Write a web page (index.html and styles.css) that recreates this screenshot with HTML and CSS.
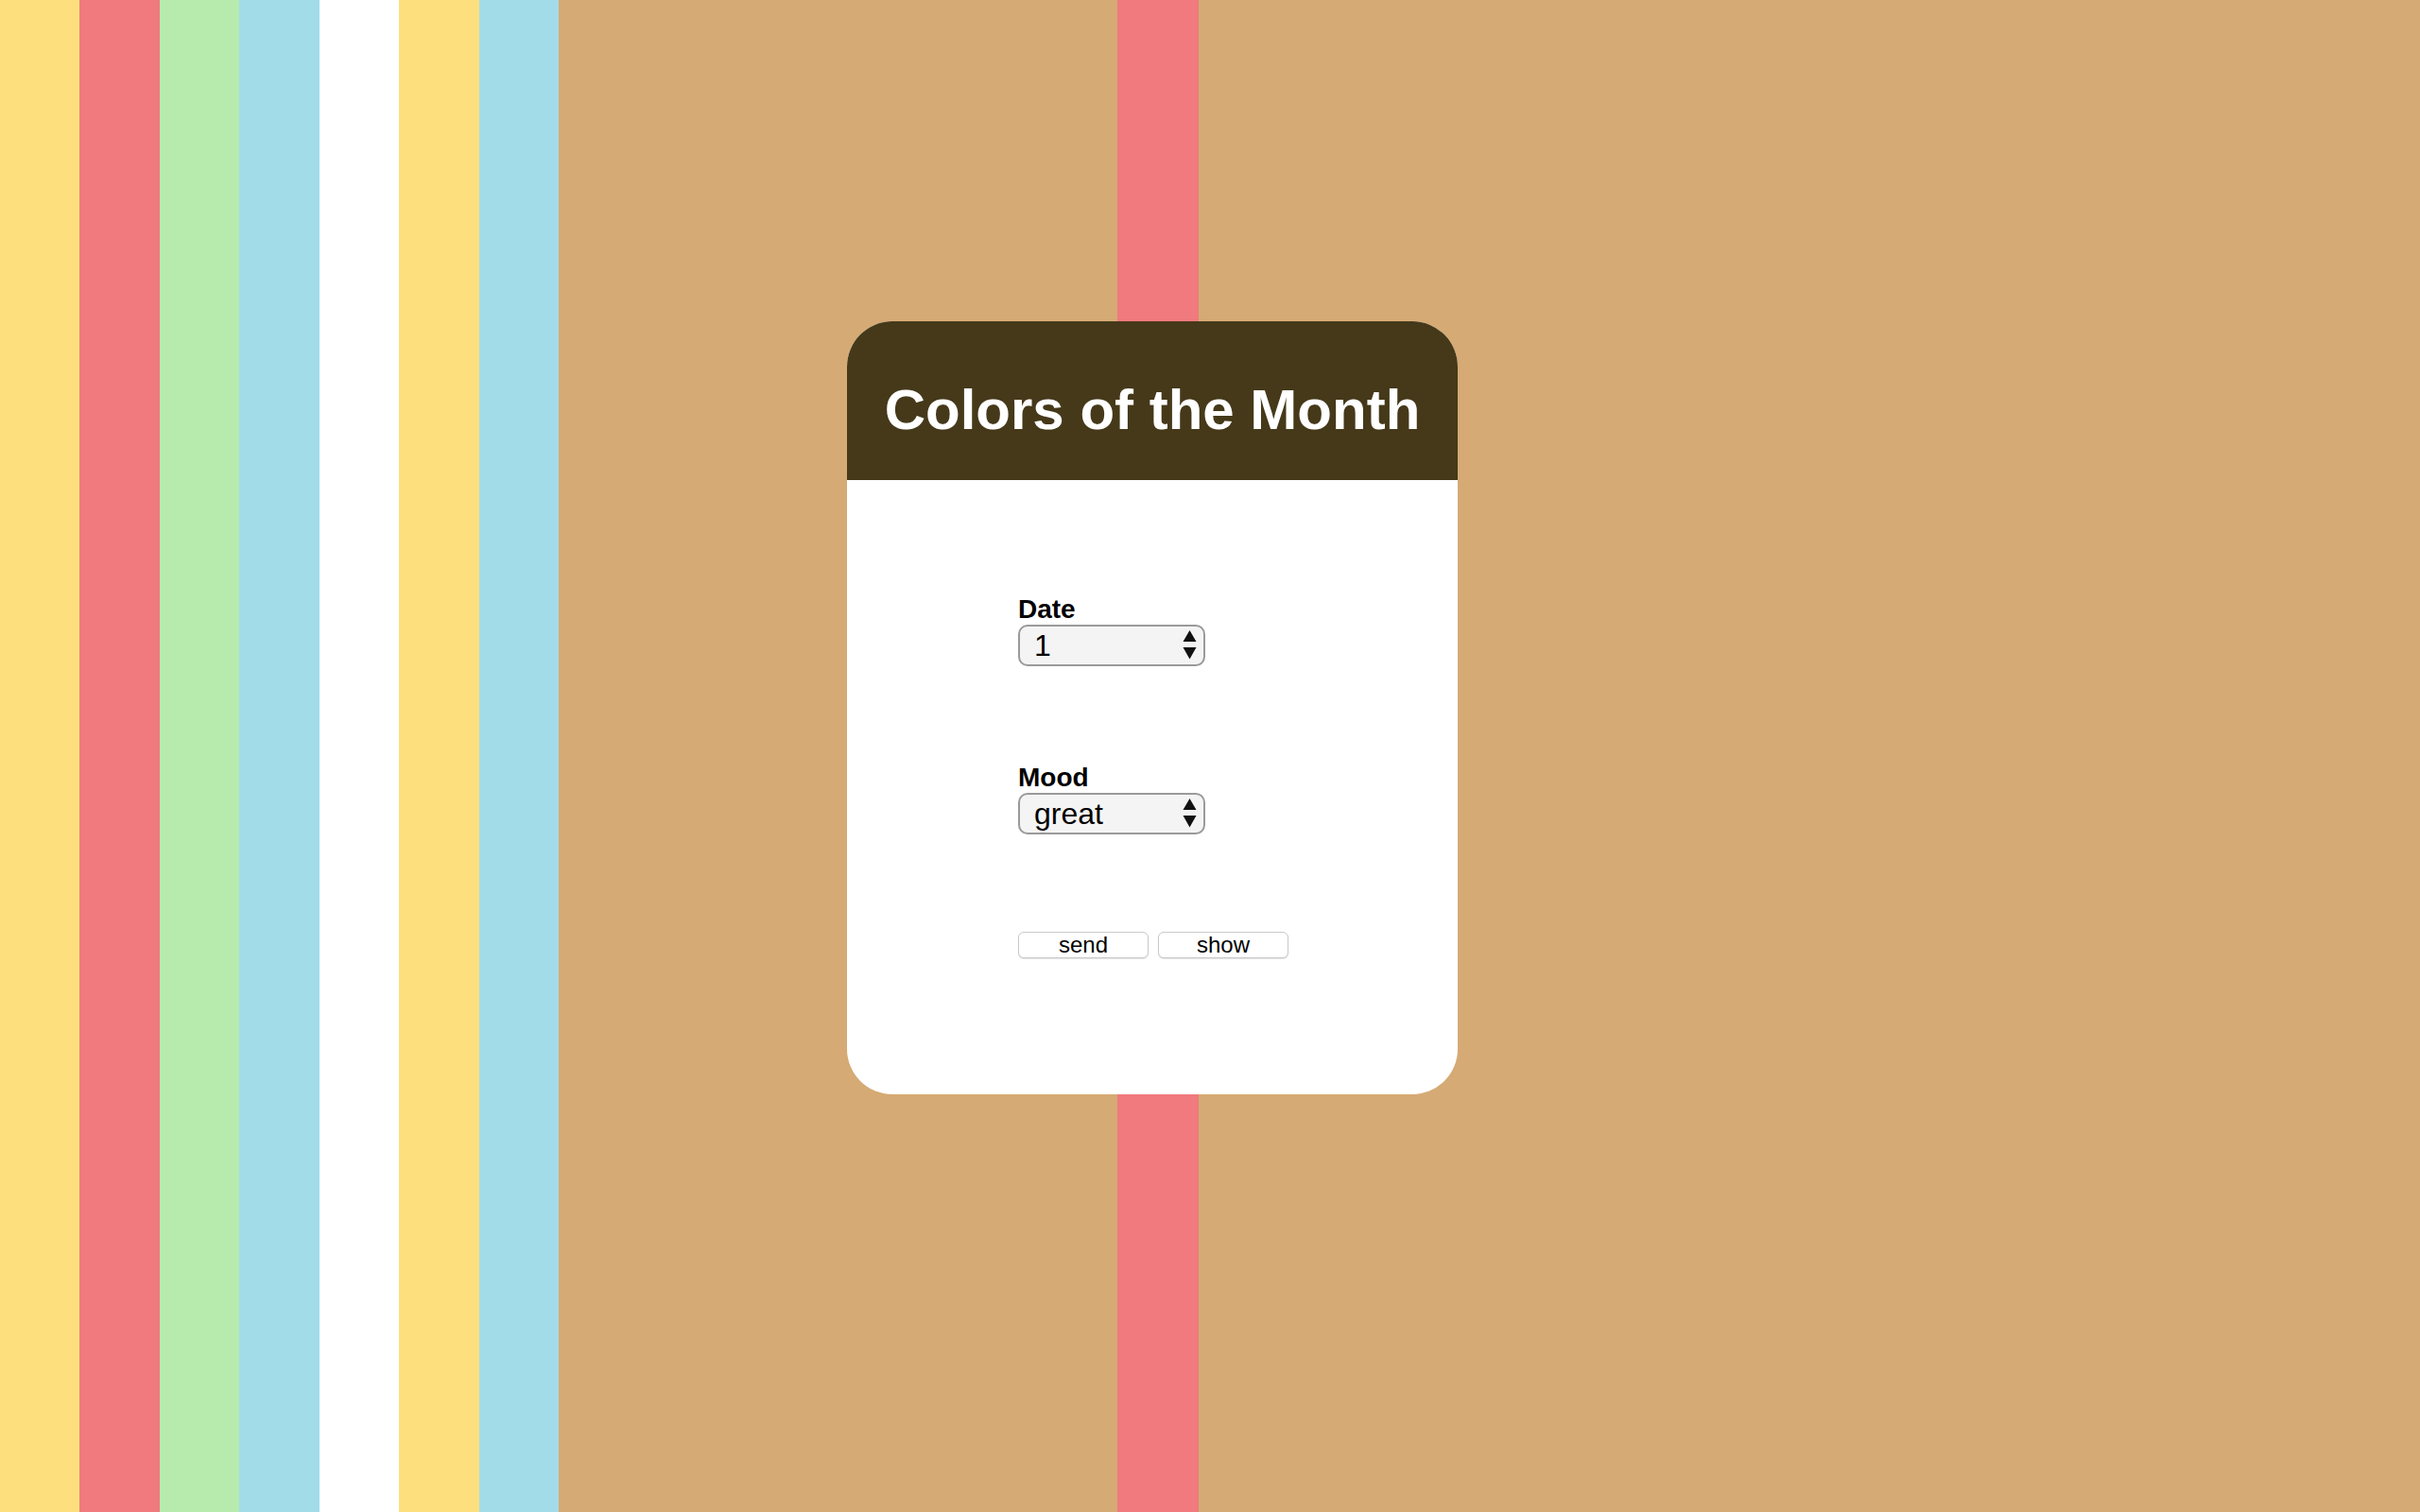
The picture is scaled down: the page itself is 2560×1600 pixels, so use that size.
FILE: index.html
```html
<!DOCTYPE html>
<html lang="en">
<head>
<meta charset="utf-8">
<title>Colors of the Month</title>
<link rel="stylesheet" href="styles.css">
</head>
<body>
<div class="days">
  <div class="day yellow"></div>
  <div class="day pink"></div>
  <div class="day green"></div>
  <div class="day blue"></div>
  <div class="day white"></div>
  <div class="day yellow"></div>
  <div class="day blue"></div>
  <div class="day"></div>
  <div class="day"></div>
  <div class="day"></div>
  <div class="day"></div>
  <div class="day"></div>
  <div class="day"></div>
  <div class="day"></div>
  <div class="day pink wide"></div>
  <div class="day"></div>
  <div class="day"></div>
  <div class="day"></div>
  <div class="day"></div>
  <div class="day"></div>
  <div class="day"></div>
  <div class="day"></div>
  <div class="day"></div>
  <div class="day"></div>
  <div class="day"></div>
  <div class="day"></div>
  <div class="day"></div>
  <div class="day"></div>
  <div class="day"></div>
  <div class="day"></div>
  <div class="day"></div>
</div>

<div class="card">
  <div class="card-header">
    <h1 class="title">Colors of the Month</h1>
  </div>
  <form class="card-body">
    <div class="field">
      <label class="label" for="date">Date</label>
      <span class="select-wrap">
        <select id="date" class="select">
          <option>1</option>
          <option>2</option>
          <option>3</option>
        </select>
        <svg class="arrows" width="15" height="31" viewBox="0 0 15 31"><polygon points="7.5,0 14.5,12 0.5,12" fill="#111"/><polygon points="0.5,18 14.5,18 7.5,30.5" fill="#111"/></svg>
      </span>
    </div>
    <div class="field">
      <label class="label" for="mood">Mood</label>
      <span class="select-wrap">
        <select id="mood" class="select">
          <option>great</option>
          <option>good</option>
          <option>okay</option>
        </select>
        <svg class="arrows" width="15" height="31" viewBox="0 0 15 31"><polygon points="7.5,0 14.5,12 0.5,12" fill="#111"/><polygon points="0.5,18 14.5,18 7.5,30.5" fill="#111"/></svg>
      </span>
    </div>
    <div class="buttons">
      <button type="button" class="btn">send</button>
      <button type="button" class="btn">show</button>
    </div>
  </form>
</div>
</body>
</html>
```

FILE: styles.css
```css
html, body {
  margin: 0;
  padding: 0;
}

body {
  width: 2560px;
  height: 1600px;
  overflow: hidden;
  background: #d5aa74;
  font-family: "Liberation Sans", Arial, sans-serif;
  position: relative;
}

.days {
  display: flex;
  height: 1600px;
}

.day {
  flex: 0 0 84.43px;
  height: 100%;
}

.day.wide {
  flex-basis: 86px;
}

.yellow { background: #fde07d; }
.pink { background: #f07a7d; }
.green { background: #b7ebae; }
.blue { background: #a3dce9; }
.white { background: #ffffff; }

.card {
  position: absolute;
  left: 896px;
  top: 340px;
  width: 646px;
  height: 818px;
  background: #ffffff;
  border-radius: 48px;
  overflow: hidden;
  display: flex;
  flex-direction: column;
}

.card-header {
  height: 168px;
  background: #45391a;
  display: flex;
  align-items: center;
  justify-content: center;
}

.title {
  margin: 20px 0 0 0;
  color: #ffffff;
  font-size: 60px;
  font-weight: bold;
  line-height: 1;
}

.card-body {
  padding: 122px 0 0 181px;
  display: flex;
  flex-direction: column;
  gap: 103px;
}

.field {
  display: flex;
  flex-direction: column;
  align-items: flex-start;
}

.label {
  display: block;
  font-size: 28px;
  font-weight: bold;
  line-height: 30px;
  color: #000;
  margin-bottom: 1px;
}

.select-wrap {
  position: relative;
  display: inline-block;
}

.select {
  appearance: none;
  -webkit-appearance: none;
  width: 198px;
  height: 44px;
  box-sizing: border-box;
  border: 2px solid #9a9a9a;
  border-radius: 10px;
  background: #f4f4f4;
  font-family: "Liberation Sans", Arial, sans-serif;
  font-size: 32px;
  color: #000;
  padding: 0 0 0 15px;
  margin: 0;
  line-height: 40px;
}

.arrows {
  position: absolute;
  right: 9px;
  top: 6px;
  pointer-events: none;
}

.buttons {
  display: flex;
  gap: 10px;
}

.btn {
  width: 138px;
  height: 28px;
  box-sizing: border-box;
  margin: 0;
  padding: 0;
  background: #ffffff;
  border: 1px solid #c9c9c9;
  border-radius: 6px;
  box-shadow: 0 1px 1px rgba(0, 0, 0, 0.12);
  font-family: "Liberation Sans", Arial, sans-serif;
  font-size: 24px;
  line-height: 26px;
  color: #000;
}
```
